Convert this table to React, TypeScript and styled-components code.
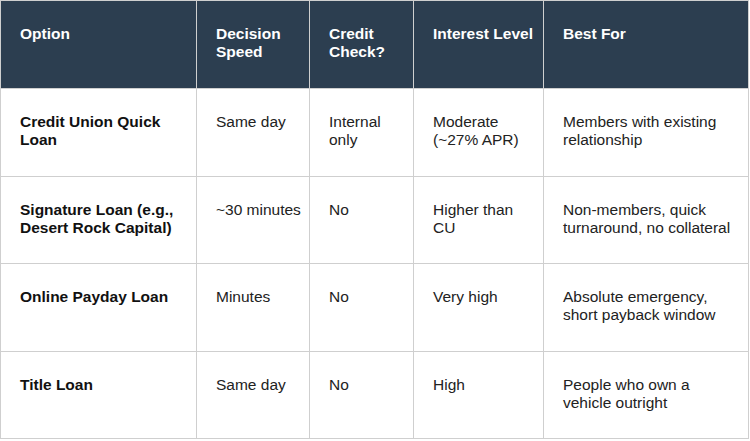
import styled, { createGlobalStyle } from "styled-components";

const GlobalStyle = createGlobalStyle`
  html, body {
    margin: 0;
    padding: 0;
    background: #ffffff;
  }
  body {
    font-family: "Liberation Sans", Arial, sans-serif;
  }
`;

const Table = styled.table`
  width: 748px;
  border-collapse: collapse;
  table-layout: fixed;
  font-size: 15.5px;
  line-height: 1.15;
`;

const HeadRow = styled.tr`
  height: 88px;
  background-color: #2c3e50;
`;

const Row = styled.tr<{ $h: number }>`
  height: ${(props) => props.$h}px;
`;

const Th = styled.th`
  border: 1px solid #cfcfcf;
  padding: 24px 6px 0px 19px;
  vertical-align: top;
  text-align: left;
  font-weight: 700;
  color: #ffffff;
`;

const Td = styled.td<{ $bold?: boolean }>`
  border: 1px solid #cfcfcf;
  padding: 24px 6px 0px 19px;
  vertical-align: top;
  text-align: left;
  font-weight: ${(props) => (props.$bold ? 700 : 400)};
  color: ${(props) => (props.$bold ? "#111111" : "#222222")};
`;

const widths = [196, 113, 104, 130, 205];
const headers = ["Option", "Decision Speed", "Credit Check?", "Interest Level", "Best For"];

const rows = [
  {
    h: 88,
    cells: [
      "Credit Union Quick Loan",
      "Same day",
      "Internal only",
      "Moderate (~27% APR)",
      "Members with existing relationship",
    ],
  },
  {
    h: 87,
    cells: [
      "Signature Loan (e.g., Desert Rock Capital)",
      "~30 minutes",
      "No",
      "Higher than CU",
      "Non-members, quick turnaround, no collateral",
    ],
  },
  {
    h: 88,
    cells: [
      "Online Payday Loan",
      "Minutes",
      "No",
      "Very high",
      "Absolute emergency, short payback window",
    ],
  },
  {
    h: 87,
    cells: ["Title Loan", "Same day", "No", "High", "People who own a vehicle outright"],
  },
];

function App() {
  return (
    <>
      <GlobalStyle />
      <Table>
        <colgroup>
          {widths.map((w, i) => (
            <col key={i} style={{ width: w }} />
          ))}
        </colgroup>
        <thead>
          <HeadRow>
            {headers.map((h) => (
              <Th key={h}>{h}</Th>
            ))}
          </HeadRow>
        </thead>
        <tbody>
          {rows.map((r) => (
            <Row key={r.cells[0]} $h={r.h}>
              {r.cells.map((c, i) => (
                <Td key={i} $bold={i === 0}>
                  {c}
                </Td>
              ))}
            </Row>
          ))}
        </tbody>
      </Table>
    </>
  );
}

export default App;
